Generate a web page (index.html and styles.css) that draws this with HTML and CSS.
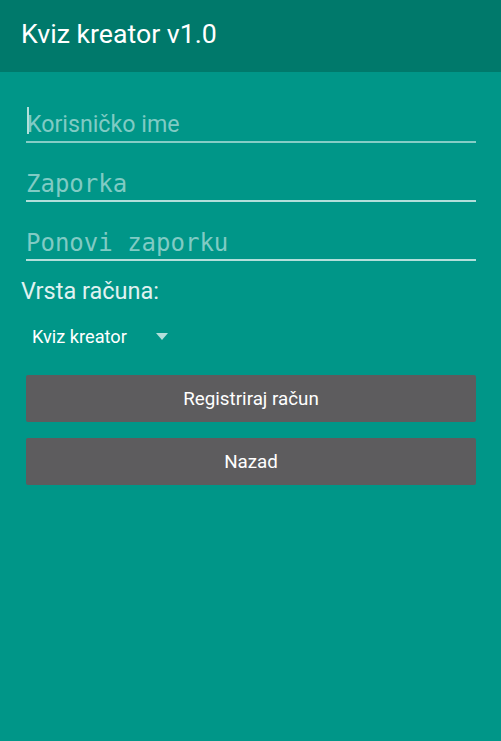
FILE: index.html
```html
<!DOCTYPE html>
<html>
<head>
<meta charset="utf-8">
<link rel="stylesheet" href="styles.css">
</head>
<body>
<header class="appbar"><h1 class="title">Kviz kreator v1.0</h1></header>
<main class="content">
  <div class="field focused"><span class="cursor"></span><span class="ph">Korisničko ime</span></div>
  <div class="field"><span class="ph mono">Zaporka</span></div>
  <div class="field"><span class="ph mono">Ponovi zaporku</span></div>
  <div class="label">Vrsta računa:</div>
  <div class="spinner"><span>Kviz kreator</span><span class="arrow"></span></div>
  <button class="btn first">Registriraj račun</button>
  <button class="btn">Nazad</button>
</main>
</body>
</html>
```
FILE: styles.css
```css
html, body { margin: 0; padding: 0; }
body {
  width: 501px; height: 741px;
  background: #009688;
  font-family: Roboto, "Noto Sans", sans-serif;
  overflow: hidden;
}
.appbar {
  height: 72px;
  background: #00796b;
  display: flex;
  align-items: center;
  padding-left: 21px;
}
.title {
  margin: 0;
  font-weight: 400;
  font-size: 26.7px;
  color: #fff;
  position: relative;
  top: -2px;
}
.content {
  padding: 0 25px 0 26px;
  display: flex;
  flex-direction: column;
}
.field {
  height: 57px;
  border-bottom: 2px solid #b2dfdb;
  display: flex;
  align-items: flex-end;
  padding-bottom: 1px;
  box-sizing: border-box;
  position: relative;
}
.field.focused {
  height: 71px;
  padding-bottom: 2px;
  border-bottom-color: rgba(178,223,219,0.75);
}
.cursor {
  position: absolute;
  left: 1px;
  bottom: 7px;
  width: 2px;
  height: 27px;
  background: #b2dfdb;
}
.field + .field { margin-top: 2px; }
.ph {
  font-size: 23.2px;
  color: #80cbc4;
  line-height: 30px;
  padding-left: 1px;
}
.mono {
  font-family: "DejaVu Sans Mono", monospace;
  font-size: 24px;
  padding-left: 0;
}
.label {
  margin-left: -5px;
  margin-top: 17px;
  font-size: 23.5px;
  color: #e0f2f1;
  line-height: 26px;
}
.spinner {
  margin-top: 20px;
  padding-left: 6px;
  display: flex;
  align-items: center;
  height: 24px;
  font-size: 18.2px;
  color: #fff;
}
.arrow {
  margin-left: 29px;
  width: 0; height: 0;
  border-left: 6.5px solid transparent;
  border-right: 6.5px solid transparent;
  border-top: 7px solid #b2dfdb;
}
.btn {
  height: 47px;
  background: #5d5c5e;
  color: #fff;
  border: none;
  border-radius: 2px;
  font-family: Roboto, sans-serif;
  font-size: 18.8px;
  padding: 0;
}
.btn.first { margin-top: 27px; }
.btn + .btn { margin-top: 16px; }
```
